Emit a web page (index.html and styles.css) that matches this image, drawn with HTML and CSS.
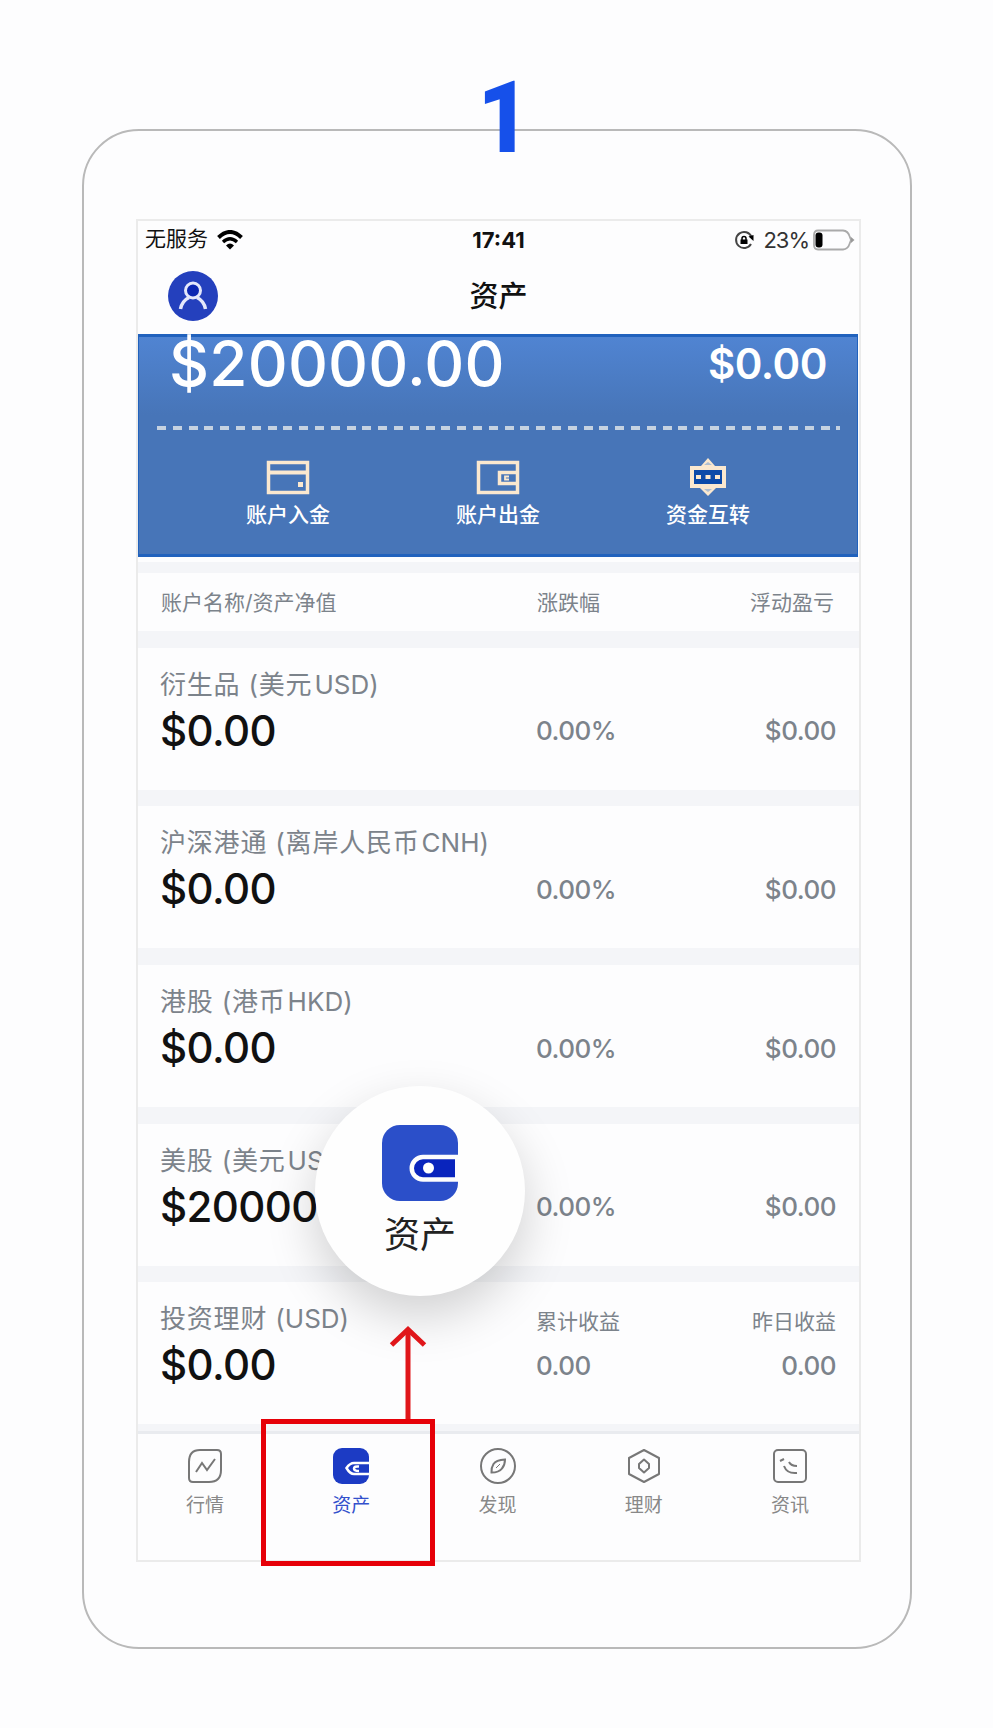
FILE: index.html
```html
<!DOCTYPE html>
<html lang="zh-CN">
<head>
    <meta charset="UTF-8">
    <meta name="viewport" content="width=device-width, initial-scale=1.0">
    <title>资产</title>
    <link rel="stylesheet" href="styles.css">
</head>
<body>

<div class="phone">
    <div class="step">1</div>

    <div class="screen">
        <div class="status-bar">
            <div class="status-left">
                <span class="carrier">无服务</span>
                <svg class="wifi" viewBox="0 0 26 20" width="26" height="20">
                    <path d="M1.5 7.5Q13-3.5 24.5 7.5" fill="none" stroke="#000" stroke-width="4"/>
                    <path d="M6 12Q13 5.500 20 12" fill="none" stroke="#000" stroke-width="3.300"/>
                    <path d="M9 15.500Q13 11.500 17 15.500L13 19.500Z"/>
                </svg>
            </div>
            <div class="time">17:41</div>
            <div class="status-right">
                <svg class="lock" viewBox="0 0 20 20" width="20" height="20">
                    <path d="M17.500 7A8 8 0 1 0 17 14" fill="none" stroke="#444" stroke-width="2"/>
                    <path d="M14.500 6.500L19.500 5V11Z"/>
                    <path d="M6.500 9.500H13.500V14H6.500Z"/>
                    <path d="M8 10V8.500A2 2 0 0 1 12 8.500V10" fill="none" stroke="#000" stroke-width="1.500"/>
                </svg>
                <span class="percent">23%</span>
                <svg class="battery" viewBox="0 0 42 22" width="42" height="22">
                    <path d="M5 1.500H30Q35 2 36.500 7L38 11L36.500 15Q35 20 30 20.500H5Q1 20.500 1 16V6Q1 1.500 5 1.500Z" fill="none" stroke="#aaa" stroke-width="1.800"/>
                    <rect x="2.500" y="3.500" width="7" height="15" rx="3"/>
                    <path d="M38 8L41.500 11L38 14Z" fill="#999"/>
                </svg>
            </div>
        </div>

        <div class="nav-bar">
            <svg class="avatar" viewBox="0 0 50 50" width="50" height="50">
                <circle cx="25" cy="25" r="25" fill="#2440bd"/>
                <circle cx="25" cy="19.500" r="7.500" fill="#0c27b2" stroke="#e4e8fb" stroke-width="3"/>
                <path d="M12.500 38Q14 30 21 26.500M29 26.500Q36 30 37.500 38" fill="none" stroke="#e4e8fb" stroke-width="3.500"/>
            </svg>
            <div class="nav-title">资产</div>
        </div>

        <div class="summary">
            <div class="totals">
                <div class="total">$20000.00</div>
                <div class="profit">$0.00</div>
            </div>
            <div class="dashes"></div>
            <div class="actions">
                <div class="action">
                    <svg viewBox="0 0 44 40" width="44" height="40" fill="none" stroke="#fbe8cf" stroke-width="3.500">
                        <rect x="2.500" y="5.500" width="39" height="30"/>
                        <path d="M3 15.500H41" stroke-width="4"/>
                        <path d="M32 27.500H37" stroke-width="5"/>
                    </svg>
                    <span>账户入金</span>
                </div>
                <div class="action">
                    <svg viewBox="0 0 44 40" width="44" height="40" fill="none" stroke="#fbe8cf" stroke-width="3.500">
                        <rect x="2.500" y="5.500" width="39" height="30"/>
                        <path d="M41 15.500H23.500V26.500H41"/>
                        <path d="M33 19.500H29V22.500H33" stroke-width="1.800"/>
                    </svg>
                    <span>账户出金</span>
                </div>
                <div class="action">
                    <svg viewBox="0 0 44 40" width="44" height="40">
                        <path d="M22 1L29 9H40V31H30L22 39L14 31H4V9H15Z" fill="#fbe8cf"/>
                        <path d="M18 8L22 5L26 8ZM18 32L22 35L26 32Z" fill="#aebed2"/>
                        <rect x="8" y="13" width="28" height="14" fill="#0c4aa9"/>
                        <path d="M10 20H15M19.500 20H24.500M29 20H34" stroke="#fbe8cf" stroke-width="4"/>
                    </svg>
                    <span>资金互转</span>
                </div>
            </div>
        </div>

        <div class="list">
            <div class="list-head">
                <div>账户名称/资产净值</div>
                <div>涨跌幅</div>
                <div class="right">浮动盈亏</div>
            </div>
            <div class="account">
                <div class="name">衍生品 (美元<span class="code">USD)</span></div>
                <div class="values">
                    <div class="amount">$0.00</div>
                    <div>0.00%</div>
                    <div class="right">$0.00</div>
                </div>
            </div>
            <div class="account">
                <div class="name">沪深港通 (离岸人民币<span class="code">CNH)</span></div>
                <div class="values">
                    <div class="amount">$0.00</div>
                    <div>0.00%</div>
                    <div class="right">$0.00</div>
                </div>
            </div>
            <div class="account">
                <div class="name">港股 (港币<span class="code">HKD)</span></div>
                <div class="values">
                    <div class="amount">$0.00</div>
                    <div>0.00%</div>
                    <div class="right">$0.00</div>
                </div>
            </div>
            <div class="account">
                <div class="name">美股 (美元<span class="code">US</span></div>
                <div class="values">
                    <div class="amount">$20000</div>
                    <div>0.00%</div>
                    <div class="right">$0.00</div>
                </div>
            </div>
            <div class="account last">
                <div class="name-row">
                    <div class="name">投资理财 <span class="plain">(USD)</span></div>
                    <div class="label">累计收益</div>
                    <div class="label right">昨日收益</div>
                </div>
                <div class="values">
                    <div class="amount">$0.00</div>
                    <div>0.00</div>
                    <div class="right">0.00</div>
                </div>
            </div>
        </div>

        <div class="tab-bar">
            <div class="tab">
                <svg viewBox="0 0 36 36" width="36" height="36" fill="none" stroke="#777" stroke-width="2">
                    <path d="M13 2H30Q34 2 34 6V22Q34 34 22 34H6Q2 34 2 30V14Q2 2 13 2Z"/>
                    <path d="M9 24L15 15L20 22L28 11"/>
                </svg>
                <span>行情</span>
            </div>
            <div class="tab active">
                <svg viewBox="0 0 36 36" width="36" height="36">
                    <rect width="36" height="36" rx="9" fill="#1c3bc4"/>
                    <path d="M36 15H21Q17 15 13.500 20Q17 26 21 26H36" fill="none" stroke="#fff" stroke-width="2.500"/>
                    <path d="M26 18.500Q21 18 21 20.500T26 23" fill="none" stroke="#fff" stroke-width="2.500"/>
                </svg>
                <span>资产</span>
            </div>
            <div class="tab">
                <svg viewBox="0 0 36 36" width="36" height="36" fill="none" stroke="#777" stroke-width="2">
                    <circle cx="18" cy="18" r="17"/>
                    <path d="M25 11.500Q16 12 13.500 16Q11 20 11.500 24.500Q19 24.500 22 20.500Q25 17 25 11.500Z"/>
                    <path d="M16 20L20 16" stroke-width="1"/>
                </svg>
                <span>发现</span>
            </div>
            <div class="tab">
                <svg viewBox="0 0 36 36" width="36" height="36" fill="none" stroke="#777" stroke-width="2">
                    <path d="M18 2L33 10V26L18 34L3 26V10Z" stroke-linejoin="round"/>
                    <path d="M18 11.500L23 16V20L18 24.500L13 20V16Z" stroke-linejoin="round"/>
                </svg>
                <span>理财</span>
            </div>
            <div class="tab">
                <svg viewBox="0 0 36 36" width="36" height="36" fill="none" stroke="#777" stroke-width="2">
                    <rect x="2" y="2" width="32" height="32" rx="4"/>
                    <path d="M8 13L12 11M17 14Q19 18 25 18M12 18Q15 26 25 25"/>
                </svg>
                <span>资讯</span>
            </div>
        </div>

        <!-- enlarged tab with its pointer -->
        <div class="bubble">
            <svg viewBox="0 0 76 76" width="76" height="76">
                <rect width="76" height="76" rx="18" fill="#2b4fc9"/>
                <path d="M76 32H41A11 11 0 0 0 41 54.500H76" fill="#0924bd" stroke="#fdfdfd" stroke-width="4.500"/>
                <rect x="73" y="30" width="3" height="26" fill="#fdfdfd"/>
                <circle cx="46.500" cy="43" r="5.500" fill="#fff"/>
            </svg>
            <span>资产</span>
        </div>
        <svg class="arrow" viewBox="0 0 38 96" width="38" height="96" fill="none" stroke="#e0161a" stroke-width="5">
            <path d="M19 4V96"/>
            <path d="M2.500 19L19 3.500L35.500 19"/>
        </svg>
        <div class="highlight"></div>
    </div>
</div>

</body>
</html>
```
FILE: styles.css
```css
* {
    box-sizing: border-box;
}
body {
    margin: 0;
    background-color: #fdfdfe;
    font-family: Inter, "Noto Sans CJK SC", sans-serif;
    color: #111;
}
svg {
    display: block;
    flex: none;
}
.phone {
    position: relative;
    width: 830px;
    height: 1520px;
    margin: 129px 0 0 82px;
    padding: 88px 49px 0 52px;
    border: 2px solid #b9b9b9;
    border-radius: 57px;
    display: flow-root;
}
.step {
    position: absolute;
    left: 391px;
    top: -61px;
    width: 50px;
    height: 96px;
    font-family: Roboto, sans-serif;
    font-size: 101px;
    line-height: 96px;
    font-weight: 900;
    color: #1650ea;
    text-align: center;
    transform: scaleX(0.9);
}
.screen {
    position: relative;
    height: 1343px;
    border: 2px solid #ebebeb;
}
.status-bar {
    height: 38px;
    padding: 0 4px 0 7px;
    display: grid;
    grid-template-columns: 1fr auto 1fr;
    align-items: center;
    font-size: 22px;
}
.status-left,
.status-right {
    display: flex;
    align-items: center;
}
.status-left {
    gap: 9px;
}
.status-right {
    justify-content: flex-end;
}
.carrier {
    font-size: 21px;
    line-height: 26px;
    margin-top: -3px;
}
.time {
    font-size: 22px;
    font-weight: 700;
    margin-right: 3px;
}
.percent {
    margin: 0 4px 0 9px;
    letter-spacing: -1px;
    color: #333;
}
.nav-bar {
    position: relative;
    height: 75px;
    display: flex;
    align-items: center;
    justify-content: center;
    padding-bottom: 5px;
}
.avatar {
    position: absolute;
    left: 30px;
    top: 12px;
}
.nav-title {
    font-size: 29px;
    font-weight: 500;
}
.summary {
    width: 720px;
    height: 223px;
    border: 2px solid #2162bd;
    border-width: 3px 1px 3px;
    background: linear-gradient(#5084d2, #4775b8 36%);
    color: #fff;
}
.totals {
    height: 84px;
    display: flex;
    justify-content: space-between;
    padding: 0 30px 0 30px;
}
.total {
    font-size: 62px;
    line-height: 53px;
    font-weight: 500;
    letter-spacing: 0.2px;
}
.profit {
    font-size: 42px;
    line-height: 53px;
    font-weight: 600;
    letter-spacing: -0.5px;
}
.dashes {
    height: 14px;
    margin: 0 17px 0 18px;
    background: repeating-linear-gradient(90deg, #c5d2e1 0 9px, transparent 9px 15.8px) 0 5px / 100% 4px no-repeat;
}
.actions {
    display: grid;
    grid-template-columns: repeat(3, 210px);
    justify-content: center;
    padding-top: 22px;
}
.action {
    display: flex;
    flex-direction: column;
    align-items: center;
    font-size: 21px;
    line-height: 36px;
    font-weight: 500;
}
.list {
    height: 874px;
    border-top: 5px solid #fdfdfe;
    padding-top: 11px;
    background-color: #f4f5f8;
    color: #7c838b;
}
.list-head,
.name-row,
.values {
    display: grid;
    grid-template-columns: 376px 1fr 1fr;
    align-items: center;
}
.list-head {
    height: 58px;
    padding: 0 25px 3px 23px;
    background-color: #fdfdfe;
    font-size: 21px;
}
.right {
    text-align: right;
}
.account {
    height: 142px;
    margin-top: 16.7px;
    padding: 18px 23px 0 22px;
    background-color: #fdfdfe;
    color: #7c838b;
}
.name {
    height: 40px;
    font-size: 26px;
    line-height: 38px;
    letter-spacing: 0.8px;
    white-space: nowrap;
}
.code {
    margin-left: 2px;
    letter-spacing: 0;
}
.plain {
    letter-spacing: 0;
}
.values {
    height: 50px;
    font-size: 26px;
    font-weight: 500;
    letter-spacing: -0.5px;
}
.amount {
    font-size: 42px;
    line-height: 50px;
    letter-spacing: -0.6px;
    color: #111;
}
.label {
    font-size: 21px;
}
.tab-bar {
    height: 129px;
    padding: 14px 39px 0 37px;
    border-top: 3px solid #e9ebef;
    background-color: #fdfdfe;
    display: flex;
    justify-content: space-between;
}
.tab {
    width: 60px;
    display: flex;
    flex-direction: column;
    align-items: center;
    font-size: 19px;
    line-height: 44px;
    color: #888;
}
.tab.active {
    color: #3350cc;
}
.bubble {
    position: absolute;
    left: 177px;
    top: 865px;
    width: 210px;
    height: 210px;
    padding-top: 39px;
    border-radius: 50%;
    background-color: #fefefe;
    box-shadow: 0 20px 50px rgba(0, 0, 0, 0.18);
    display: flex;
    flex-direction: column;
    align-items: center;
    font-size: 36px;
    line-height: 68px;
    color: #222;
}
.arrow {
    position: absolute;
    left: 251px;
    top: 1105px;
}
.highlight {
    position: absolute;
    left: 123px;
    top: 1198px;
    width: 174px;
    height: 147px;
    border: 5px solid #e60008;
}
```
